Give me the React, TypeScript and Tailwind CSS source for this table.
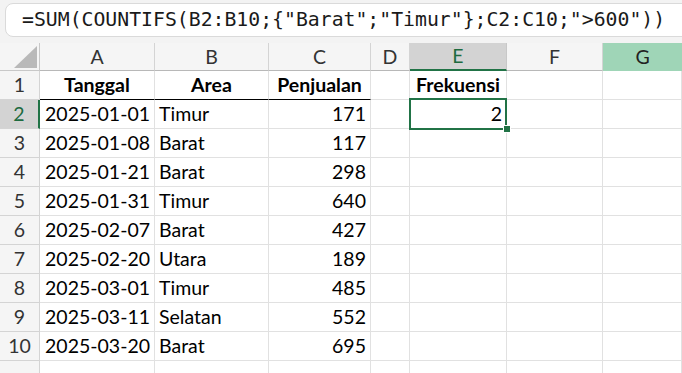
import React from 'react';

const rows: [string, string, number][] = [
  ['2025-01-01', 'Timur', 171],
  ['2025-01-08', 'Barat', 117],
  ['2025-01-21', 'Barat', 298],
  ['2025-01-31', 'Timur', 640],
  ['2025-02-07', 'Barat', 427],
  ['2025-02-20', 'Utara', 189],
  ['2025-03-01', 'Timur', 485],
  ['2025-03-11', 'Selatan', 552],
  ['2025-03-20', 'Barat', 695],
];

const cols = ['A', 'B', 'C', 'D', 'E', 'F', 'G'];
const formula = '=SUM(COUNTIFS(B2:B10;{"Barat";"Timur"};C2:C10;">600"))';

const cell = 'h-[29px] border-r border-b border-[#e1e1e1] flex items-center px-[4px] text-black overflow-hidden whitespace-nowrap';
const rowHead = 'h-[29px] border-r border-b border-[#d4d4d4] bg-[#f5f5f5] flex items-center justify-center text-[#333]';

const App: React.FC = () => {
  return (
    <div className="w-[682px] h-[373px] overflow-hidden bg-[#f3f3f3] flex flex-col" style={{ fontFamily: 'Lato, "Open Sans", sans-serif' }}>
      {/* Barra de fórmula */}
      <div className="h-[43px] pt-[3px] pl-[5px] shrink-0">
        <div className="h-[34px] -mr-3 bg-white border border-[#dadada] rounded-lg flex items-center pl-[16px] text-[19.8px] text-[#1a1a1a] whitespace-nowrap" style={{ fontFamily: '"DejaVu Sans Mono", "Liberation Mono", monospace' }}>
          {formula}
        </div>
      </div>

      {/* Hoja */}
      <div className="grid grid-cols-[40px_115px_114px_102px_39px_97px_96px_1fr] text-[19.5px] bg-white flex-1">
        {/* Cabecera de columnas */}
        <div className="h-[28px] bg-[#f5f5f5] border-r border-b border-[#c8c8c8] relative">
          <svg className="absolute left-[14px] top-[3px]" width="23" height="22" viewBox="0 0 23 22">
            <polygon points="23,0 23,22 0,22" fill="#b9b9b9" />
          </svg>
        </div>
        {cols.map((c) => {
          if (c === 'E')
            return (
              <div key={c} className="h-[28px] bg-[#d3d3d3] border-r border-[#c8c8c8] border-b-2 border-b-[#217346] flex items-center justify-center text-[#1d6b3f]">
                {c}
              </div>
            );
          if (c === 'G')
            return (
              <div key={c} className="h-[28px] bg-[#9fd5b7] border-b border-[#9fd5b7] flex items-center justify-center text-[#222]">
                {c}
              </div>
            );
          return (
            <div key={c} className="h-[28px] bg-[#f5f5f5] border-r border-[#d4d4d4] border-b border-b-[#b8b8b8] flex items-center justify-center text-[#333]">
              {c}
            </div>
          );
        })}

        {/* Fila 1 */}
        <div className={rowHead}>1</div>
        <div className={`${cell} justify-center font-bold border-b-black`}>Tanggal</div>
        <div className={`${cell} justify-center font-bold border-b-black`}>Area</div>
        <div className={`${cell} justify-center font-bold border-b-black`}>Penjualan</div>
        <div className={cell}></div>
        <div className={`${cell} justify-center font-bold`}>Frekuensi</div>
        <div className={cell}></div>
        <div className={cell}></div>

        {rows.map(([d, a, v], i) => {
          const n = i + 2;
          const active = n === 2;
          return (
            <React.Fragment key={n}>
              {active ? (
                <div className="h-[29px] border-b border-[#d4d4d4] border-r-2 border-r-[#217346] bg-[#d3d3d3] flex items-center justify-center text-[#1d6b3f]">{n}</div>
              ) : (
                <div className={rowHead}>{n}</div>
              )}
              <div className={`${cell} justify-end`}>{d}</div>
              <div className={cell}>{a}</div>
              <div className={`${cell} justify-end`}>{v}</div>
              <div className={cell}></div>
              {active ? (
                <div className={`${cell} justify-end relative overflow-visible`}>
                  2
                  <div className="absolute -left-px -top-[2px] right-[-1px] bottom-[-2px] border-2 border-[#217346]" />
                  <div className="absolute right-[-5px] bottom-[-5px] w-[8px] h-[8px] bg-[#217346] border border-white" />
                </div>
              ) : (
                <div className={cell}></div>
              )}
              <div className={cell}></div>
              <div className={cell}></div>
            </React.Fragment>
          );
        })}

        {/* Fila parcial */}
        <div className={rowHead}></div>
        {cols.map((c) => (
          <div key={c} className={cell}></div>
        ))}
      </div>
    </div>
  );
};

export default App;
